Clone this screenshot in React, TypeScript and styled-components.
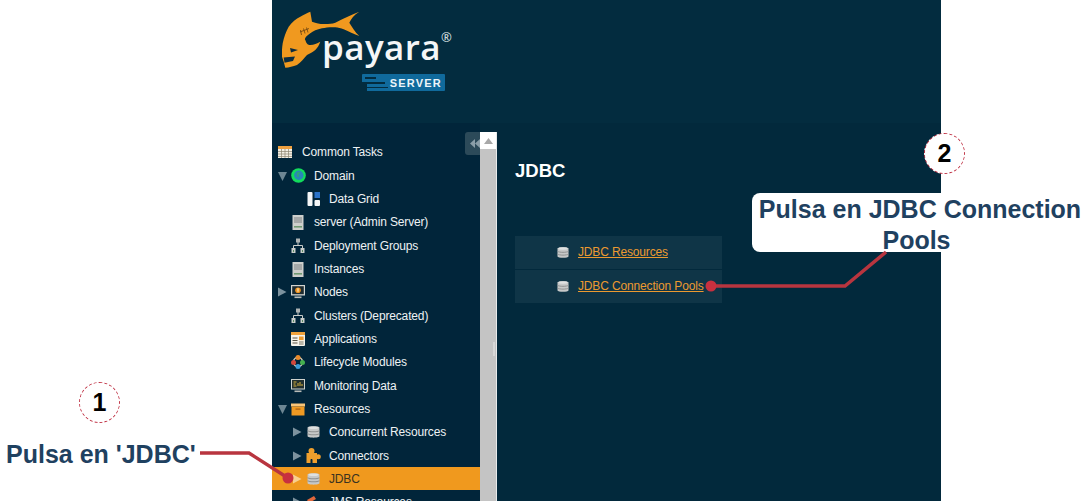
import styled, { createGlobalStyle } from "styled-components";

const GlobalStyle = createGlobalStyle`
  html, body {
    margin: 0;
    padding: 0;
    background: #fff;
  }
  body {
    font-family: "Liberation Sans", Arial, sans-serif;
  }
`;

const Stage = styled.div`
  position: relative;
  width: 1088px;
  height: 501px;
  overflow: hidden;
  display: flex;
  background: #fff;
`;

const Console = styled.div`
  width: 669px;
  height: 501px;
  margin-left: 272px;
  display: flex;
  flex-direction: column;
  flex-shrink: 0;
  background: #02293c;
  overflow: hidden;
`;

const Header = styled.header`
  height: 123px;
  flex-shrink: 0;
  box-sizing: border-box;
  padding: 11px 0 0 10px;
  background: #032c3f;
`;

const Logo = styled.div`
  display: flex;
  align-items: flex-start;
`;

const Wordmarks = styled.div`
  margin-left: -39px;
  display: flex;
  flex-direction: column;
  align-items: flex-start;
`;

const Payara = styled.div`
  height: 63px;
  padding-top: 16px;
  box-sizing: border-box;
  display: flex;
  align-items: flex-start;
  color: #f4f6f7;
  font-family: "Open Sans", sans-serif;
  font-size: 35px;
  font-weight: 600;
  line-height: 40px;
  letter-spacing: 0.4px;
`;

const Registered = styled.span`
  font-size: 13px;
  font-weight: 400;
  line-height: 14px;
  margin-top: 3px;
  letter-spacing: 0;
  color: #dfe5e8;
`;

const BadgeHolder = styled.div`
  position: relative;
  margin-left: 40px;
`;

const ServerBadge = styled.div`
  width: 83px;
  height: 17px;
  display: flex;
  align-items: center;
  justify-content: flex-end;
  padding-right: 3px;
  box-sizing: border-box;
  background: #106a9c;
  border-radius: 1px;
  color: #eef5f9;
  font-size: 11px;
  font-weight: 700;
  letter-spacing: 1.2px;
`;

const Body = styled.div`
  flex: 1;
  display: flex;
  min-height: 0;
`;

const Sidebar = styled.nav`
  position: relative;
  width: 208px;
  flex-shrink: 0;
  box-sizing: border-box;
  padding-top: 17.3px;
  background: #01253a;
`;

const CollapseButton = styled.div`
  position: absolute;
  top: 9px;
  right: 0;
  width: 15px;
  height: 23px;
  border-radius: 3px 0 0 3px;
  background: #2c4a59;
  display: flex;
  align-items: center;
  justify-content: flex-end;
`;

const Row = styled.div<{ $level: number; $selected?: boolean }>`
  height: 23.33px;
  box-sizing: border-box;
  padding-left: ${(p) => (p.$level === 0 ? 6 : 6 + (p.$level - 1) * 15)}px;
  padding-top: 1px;
  display: flex;
  align-items: center;
  font-size: 12px;
  letter-spacing: -0.15px;
  white-space: nowrap;
  color: ${(p) => (p.$selected ? "#3a3320" : "#eef2f4")};
  background: ${(p) => (p.$selected ? "#f0991e" : "transparent")};
`;

const ArrowSlot = styled.span`
  width: 13px;
  height: 12px;
  flex-shrink: 0;
  display: flex;
  align-items: center;
`;

const IconSlot = styled.span<{ $wide?: boolean }>`
  width: 14px;
  height: 15px;
  margin-right: ${(p) => (p.$wide ? 10 : 9)}px;
  flex-shrink: 0;
  display: flex;
  align-items: center;
  justify-content: center;
`;

const Scrollbar = styled.div`
  width: 16px;
  margin-top: 9px;
  flex-shrink: 0;
  display: flex;
  flex-direction: column;
  background: #c4c4c4;
`;

const ScrollButton = styled.div`
  height: 17px;
  background: #fff;
  display: flex;
  align-items: center;
  justify-content: center;
`;

const Splitter = styled.div`
  position: relative;
  width: 1px;
  margin-top: 9px;
  flex-shrink: 0;
  background: #e8eaeb;

  &::after {
    content: "";
    position: absolute;
    top: 210px;
    left: -3px;
    width: 2px;
    height: 14px;
    background: #d7d7d7;
  }
`;

const Content = styled.main`
  flex: 1;
  box-sizing: border-box;
  padding: 37px 0 0 18px;
  background: #02293c;
`;

const Title = styled.h1`
  margin: 0 0 55px;
  height: 21px;
  font-size: 18.5px;
  line-height: 21px;
  font-weight: 700;
  color: #fff;
`;

const LinkPanel = styled.div`
  width: 207px;
  display: flex;
  flex-direction: column;
  gap: 1px;
`;

const LinkRow = styled.div`
  height: 33px;
  box-sizing: border-box;
  padding-left: 42px;
  display: flex;
  align-items: center;
  gap: 9px;
  background: #0f3547;
`;

const LinkText = styled.a`
  font-size: 12px;
  letter-spacing: -0.15px;
  margin-top: -2px;
  color: #ec9a30;
  text-decoration: underline;
`;

const Overlay = styled.svg`
  position: absolute;
  inset: 0;
  pointer-events: none;
`;

const StepBadge = styled.div<{ $x: number; $y: number }>`
  position: absolute;
  left: ${(p) => p.$x}px;
  top: ${(p) => p.$y}px;
  width: 41px;
  height: 41px;
  box-sizing: border-box;
  border: 1px dashed #c2384a;
  border-radius: 50%;
  background: #fff;
  display: flex;
  align-items: center;
  justify-content: center;
  font-size: 25px;
  font-weight: 700;
  color: #000;
`;

const LeftLabel = styled.div`
  position: absolute;
  left: 6px;
  top: 439px;
  font-size: 25px;
  line-height: 30px;
  font-weight: 700;
  color: #1f4160;
  white-space: nowrap;
`;

const Callout = styled.div`
  position: absolute;
  left: 752px;
  top: 193px;
  width: 336px;
  height: 59px;
  padding-top: 1px;
  box-sizing: border-box;
  border-radius: 8px 0 0 8px;
  background: #fff;
  text-align: center;
  font-size: 25px;
  line-height: 31px;
  font-weight: 700;
  white-space: nowrap;
  color: #1f4160;
`;

const CalloutLastLine = styled.span`
  display: block;
  padding-right: 7px;
`;

const TriangleDown = () => (
  <svg width="10" height="12" viewBox="0 0 10 12">
    <path d="M0 2h9L4.500 11z" fill="#6d8693" />
  </svg>
);

const TriangleRight = ({ light }: { light?: boolean }) => (
  <svg width="10" height="12" viewBox="0 0 10 12">
    <path d="M0 1.500v9L8.500 6z" fill={light ? "#f8cf8f" : "#7c929e"} />
  </svg>
);

const CalendarIcon = () => (
  <svg width="14" height="14" viewBox="0 0 14 14">
    <rect y="1" width="14" height="12" fill="#f3efe4" />
    <rect y="1" width="14" height="3" fill="#eea040" />
    <path d="M0 6.500h14M0 9h14M0 11.500h14M3.500 4v9M7 4v9M10.500 4v9" stroke="#8d8570" strokeWidth="0.7" />
  </svg>
);

const GlobeIcon = () => (
  <svg width="15" height="15" viewBox="0 0 15 15" style={{ flexShrink: 0 }}>
    <circle cx="7.500" cy="7.500" r="7.300" fill="#12dc5c" />
    <circle cx="7.800" cy="7.200" r="4.700" fill="#2a86b8" />
    <path d="M6 4.500l2.500-.8.800 1.800-1.800.8.600 2.400-1.600.6-.8-2.600z" fill="#2da37c" />
  </svg>
);

const DataGridIcon = () => (
  <svg width="13" height="14" viewBox="0 0 13 14">
    <rect x="0.500" width="5" height="14" rx="1" fill="#f4f6f7" />
    <rect x="7.500" width="5.500" height="6" fill="#2a73c9" />
    <rect x="7.500" y="8" width="5.500" height="6" rx="1" fill="#f4f6f7" />
  </svg>
);

const ServerIcon = () => (
  <svg width="12" height="15" viewBox="0 0 12 15">
    <rect x="0.500" width="11" height="15" fill="#cdcfcc" />
    <path d="M2 3h8M2 5h8M2 7h8" stroke="#7c8082" />
    <rect x="2" y="11" width="8" height="1.600" fill="#6f9a72" />
  </svg>
);

const TreeIcon = () => (
  <svg width="14" height="15" viewBox="0 0 14 15">
    <path d="M7 4v3M2.500 10V7.500h9V10" fill="none" stroke="#c9cdca" />
    <rect x="5" y="0.500" width="4" height="4" fill="#aeb4b4" />
    <rect x="0.500" y="10" width="4" height="5" fill="#c9cdca" />
    <rect x="9.500" y="10" width="4" height="5" fill="#c9cdca" />
    <path d="M2.500 12v2M11.500 12v2" stroke="#5e8b64" />
  </svg>
);

const NodeIcon = () => (
  <svg width="14" height="14" viewBox="0 0 14 14">
    <rect width="14" height="10.500" fill="#d2d4d0" />
    <rect x="1.200" y="1.200" width="11.600" height="8" fill="#1d2b30" />
    <circle cx="7" cy="5.200" r="2.800" fill="#ef9420" />
    <rect x="6.500" y="3.200" width="1" height="3.600" fill="#fff3d8" />
    <rect x="3.500" y="11.500" width="7" height="1.600" fill="#b9bcb8" />
  </svg>
);

const AppsIcon = () => (
  <svg width="14" height="14" viewBox="0 0 14 14">
    <rect width="14" height="14" rx="1" fill="#f6f3ea" />
    <rect width="14" height="3" fill="#efa23c" />
    <path d="M1.500 6h5M1.500 8.500h5M1.500 11h5" stroke="#5a5546" strokeWidth="1.100" />
    <rect x="8" y="4.500" width="4.600" height="3.600" fill="#ee9a2c" />
    <path d="M8 10h4.600M8 12h4.600" stroke="#7b7564" />
  </svg>
);

const LifecycleIcon = () => (
  <svg width="14" height="14" viewBox="0 0 14 14">
    <circle cx="7" cy="7" r="4.600" fill="none" stroke="#c9c3b0" strokeWidth="1.600" />
    <circle cx="7" cy="2.500" r="2.500" fill="#e98a2a" />
    <circle cx="11.500" cy="7.500" r="2.500" fill="#44b04f" />
    <circle cx="7" cy="11.500" r="2.500" fill="#3a9bd8" />
    <circle cx="2.500" cy="7.500" r="2.500" fill="#d2473c" />
  </svg>
);

const MonitorIcon = () => (
  <svg width="14" height="14" viewBox="0 0 14 14">
    <rect width="14" height="10.500" fill="#cfd2cd" />
    <rect x="1" y="1" width="12" height="8.500" fill="#23302f" />
    <path d="M2.500 3h3M2.500 5h2M2.500 7h3M7 7V4M9 7V3M11 7V5" stroke="#d8b23e" />
    <rect x="3.500" y="11.500" width="7" height="1.600" fill="#b9bcb8" />
  </svg>
);

const BoxIcon = () => (
  <svg width="14" height="13" viewBox="0 0 14 13">
    <rect y="0.500" width="14" height="3" fill="#f9c578" />
    <rect x="0.500" y="3.500" width="13" height="9" fill="#ef9a23" />
    <rect x="4.500" y="5.500" width="5" height="1.200" fill="#a85f10" />
  </svg>
);

const DbIcon = ({ size = 13 }: { size?: number }) => (
  <svg width={size} height={size + 1} viewBox="0 0 12 13" style={{ flexShrink: 0 }}>
    <path d="M0.500 2.500C0.500 0.800 11.500 0.800 11.500 2.500v8c0 1.700-11 1.700-11 0z" fill="#c6c8c8" />
    <path d="M0.500 5.200c1.500 1.500 9.500 1.500 11 0M0.500 8c1.500 1.500 9.500 1.500 11 0" fill="none" stroke="#8f9191" strokeWidth="1" />
    <ellipse cx="6" cy="2.500" rx="4.600" ry="1.200" fill="#dfe1e1" />
  </svg>
);

const PuzzleIcon = () => (
  <svg width="15" height="15" viewBox="0 0 15 15" style={{ flexShrink: 0 }}>
    <rect x="0.500" y="5" width="10.500" height="10" fill="#ef9f2c" />
    <circle cx="5.500" cy="3" r="3" fill="#ef9f2c" />
    <circle cx="12.300" cy="8.800" r="2.500" fill="#ef9f2c" />
    <path d="M4.500 15v-3c0-1.300 2-1.300 2 0v3z" fill="#01253a" />
  </svg>
);

const QueueIcon = () => (
  <svg width="14" height="14" viewBox="0 0 14 14">
    <path d="M1 5l7-4 2 3-7 4z" fill="#e2683c" />
    <rect x="5" y="6" width="8" height="7" fill="#cfd1d1" />
  </svg>
);

const FishLogo = () => (
  <svg width="79" height="58" viewBox="0 0 79 58" style={{ flexShrink: 0 }}>
    <path
      d="M28.300 0.700L30 10.700C35 12.500 39 13.300 43.300 13 47 12.800 50 12.800 53.300 11.700 61 8 69 3.500 77.300 0.700 72 4 69 8 67.300 11.700 70 16 73 21 77.300 25 71 23 66 20 61.700 18.300 59 17.300 56 16.500 53.300 16.300 48 16 44 16.500 40 17.300 35 18.300 31 20 28.300 22.300 24 25 22 28 23.300 29 24.500 33 26 34 28.300 34 32 34 35 32.500 38.300 30.700 37 34 35.500 37 33.300 39 30 41.500 27.500 42.500 25 44 22 47.500 19 51 15 54 11 55.500 7 56.500 3.300 56.700L1.700 50.700 0 45.700C-0.300 41 0 37 0.700 32.300 2 26 4 20.500 6.700 15.700 10 11 14 8 18.300 5.700 22 3.700 25 2 28.300 0.700Z"
      fill="#f0991f"
    />
    <path d="M18.500 19l1 5M21.500 17.500l1.500 5M24.500 16.500l1.500 5M18 21l9-3.500" stroke="#6a4312" strokeWidth="0.800" fill="none" />
    <path d="M8 37l8 2-7 2.500z" fill="#0c2c3f" />
    <path d="M1.700 46.500l11.300-1-2 4.500-8.500 1.800z" fill="#0c2c3f" />
  </svg>
);

const BadgeWave = () => (
  <svg width="28" height="17" viewBox="0 0 28 17" style={{ position: "absolute", left: 0, top: 0 }}>
    <path d="M3 3h11v2H3zM0 8h23v2H0zM0 10h5v7H0zM5 14h21v-1H5z" fill="#032c3f" />
  </svg>
);

const items = [
  { label: "Common Tasks", level: 0, icon: <CalendarIcon /> },
  { label: "Domain", level: 1, open: true, icon: <GlobeIcon /> },
  { label: "Data Grid", level: 2, icon: <DataGridIcon /> },
  { label: "server (Admin Server)", level: 1, icon: <ServerIcon /> },
  { label: "Deployment Groups", level: 1, icon: <TreeIcon /> },
  { label: "Instances", level: 1, icon: <ServerIcon /> },
  { label: "Nodes", level: 1, closed: true, icon: <NodeIcon /> },
  { label: "Clusters (Deprecated)", level: 1, icon: <TreeIcon /> },
  { label: "Applications", level: 1, icon: <AppsIcon /> },
  { label: "Lifecycle Modules", level: 1, icon: <LifecycleIcon /> },
  { label: "Monitoring Data", level: 1, icon: <MonitorIcon /> },
  { label: "Resources", level: 1, open: true, icon: <BoxIcon /> },
  { label: "Concurrent Resources", level: 2, closed: true, icon: <DbIcon /> },
  { label: "Connectors", level: 2, closed: true, icon: <PuzzleIcon /> },
  { label: "JDBC", level: 2, closed: true, selected: true, icon: <DbIcon /> },
  { label: "JMS Resources", level: 2, closed: true, icon: <QueueIcon /> },
];

export default function App() {
  return (
    <Stage>
      <GlobalStyle />
      <Console>
        <Header>
          <Logo>
            <FishLogo />
            <Wordmarks>
              <Payara>
                payara
                <Registered>®</Registered>
              </Payara>
              <BadgeHolder>
                <ServerBadge>SERVER</ServerBadge>
                <BadgeWave />
              </BadgeHolder>
            </Wordmarks>
          </Logo>
        </Header>
        <Body>
          <Sidebar>
            <CollapseButton>
              <svg width="10" height="9" viewBox="0 0 10 9">
                <path d="M5 0v9L0 4.500zM10 0v9L5 4.500z" fill="#8b9ea8" />
              </svg>
            </CollapseButton>
            {items.map((item) => (
              <Row key={item.label} $level={item.level} $selected={item.selected}>
                {item.level > 0 && (
                  <ArrowSlot>
                    {item.open && <TriangleDown />}
                    {item.closed && <TriangleRight light={item.selected} />}
                  </ArrowSlot>
                )}
                <IconSlot $wide={item.level === 0}>{item.icon}</IconSlot>
                <span>{item.label}</span>
              </Row>
            ))}
          </Sidebar>
          <Scrollbar>
            <ScrollButton>
              <svg width="9" height="6" viewBox="0 0 9 6">
                <path d="M4.500 0L9 6H0z" fill="#a8a8a8" />
              </svg>
            </ScrollButton>
          </Scrollbar>
          <Splitter />
          <Content>
            <Title>JDBC</Title>
            <LinkPanel>
              <LinkRow>
                <DbIcon size={12} />
                <LinkText>JDBC Resources</LinkText>
              </LinkRow>
              <LinkRow>
                <DbIcon size={12} />
                <LinkText>JDBC Connection Pools</LinkText>
              </LinkRow>
            </LinkPanel>
          </Content>
        </Body>
      </Console>

      <Callout>
        Pulsa en JDBC Connection
        <CalloutLastLine>Pools</CalloutLastLine>
      </Callout>
      <LeftLabel>Pulsa en 'JDBC'</LeftLabel>
      <StepBadge $x={79} $y={382}>1</StepBadge>
      <StepBadge $x={924} $y={133}>2</StepBadge>

      <Overlay width="1088" height="501" viewBox="0 0 1088 501">
        <path d="M200 453H249L288 478" fill="none" stroke="#b8353f" strokeWidth="3.500" />
        <circle cx="288" cy="478" r="5.500" fill="#c8303f" />
        <path d="M711 286H845L886 252" fill="none" stroke="#b8353f" strokeWidth="3.500" />
        <circle cx="711" cy="286" r="5.500" fill="#c8303f" />
      </Overlay>
    </Stage>
  );
}
